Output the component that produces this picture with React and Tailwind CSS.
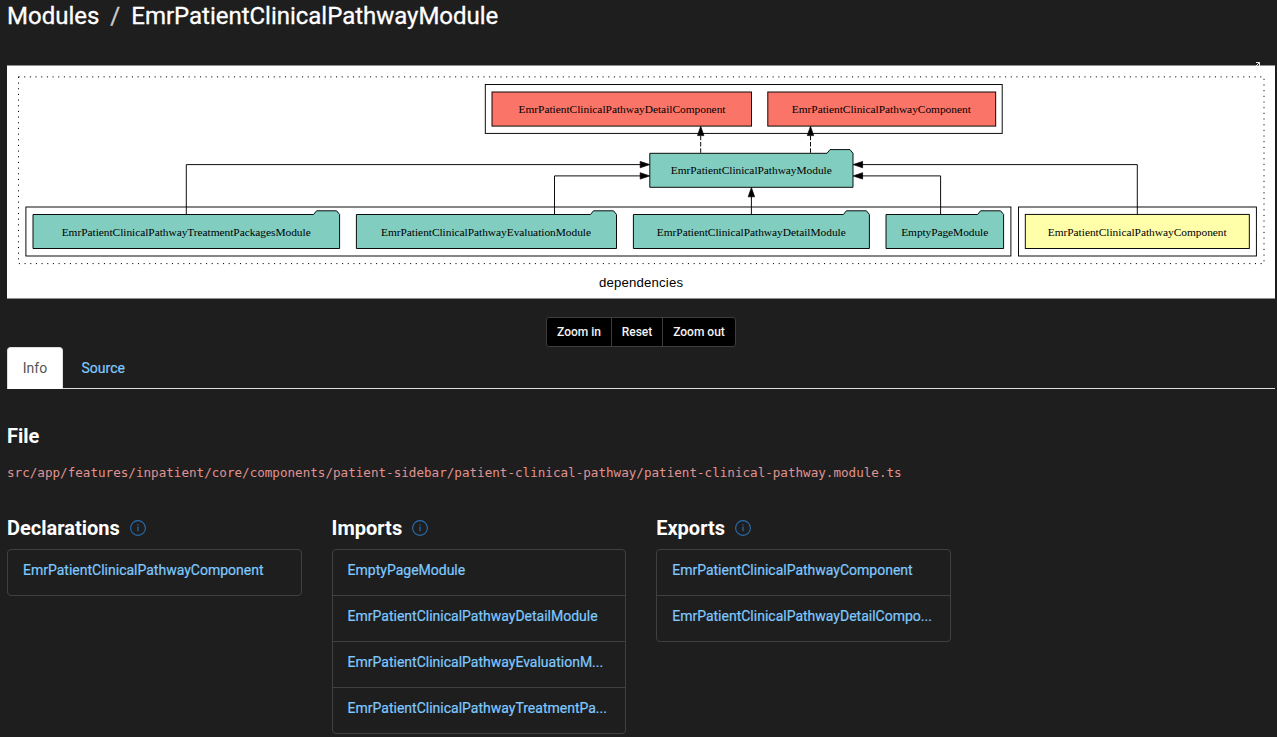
const TEAL = "#81cdc0";
const RED = "#fb7468";
const YELLOW = "#ffffaa";

function NodeLabel({ x, y, width, children }) {
  return (
    <text x={x} y={y} textAnchor="middle" textLength={width} lengthAdjust="spacing" className="fill-black font-['Liberation_Serif',serif] text-[11.4px]">
      {children}
    </text>
  );
}

function ModuleNode({ x1, y1, x2, y2, label, labelX, labelWidth }) {
  const points = `${x2},${y1} ${x2 - 3},${y1 - 3.7} ${x2 - 23},${y1 - 3.7} ${x2 - 26},${y1} ${x1},${y1} ${x1},${y2} ${x2},${y2}`;
  return (
    <g>
      <polygon points={points} fill={TEAL} stroke="black" strokeWidth="0.95" />
      <NodeLabel x={labelX} y={y1 + 21.1} width={labelWidth}>{label}</NodeLabel>
    </g>
  );
}

function ComponentNode({ x, y, width, fill, label, labelX, labelWidth }) {
  return (
    <g>
      <rect x={x} y={y} width={width} height="34.1" fill={fill} stroke="black" strokeWidth="0.95" />
      <NodeLabel x={labelX} y={y + 21.2} width={labelWidth}>{label}</NodeLabel>
    </g>
  );
}

function DependencyGraph() {
  return (
    <svg viewBox="7 66 1268 232" className="block h-full w-full overflow-visible" fill="none">
      <rect x="7" y="65.5" width="1268" height="233" fill="white" />
      <rect x="18.5" y="76.9" width="1245.5" height="186.7" stroke="black" strokeWidth="1" strokeDasharray="1.1 4.57" />
      <g stroke="black" strokeWidth="0.95">
        <rect x="485.3" y="84.5" width="516.9" height="48.9" />
        <rect x="25.9" y="207" width="985" height="49" />
        <rect x="1018.5" y="207" width="237.9" height="49" />
      </g>
      <ComponentNode x={492} y={92} width={259.5} fill={RED} label="EmrPatientClinicalPathwayDetailComponent" labelX={622} labelWidth={207} />
      <ComponentNode x={767.8} y={92} width={227.9} fill={RED} label="EmrPatientClinicalPathwayComponent" labelX={881.3} labelWidth={179} />
      <ModuleNode x1={649.8} y1={153.3} x2={853} y2={187.3} label="EmrPatientClinicalPathwayModule" labelX={751.3} labelWidth={161} />
      <ModuleNode x1={33} y1={214.5} x2={339.6} y2={248.5} label="EmrPatientClinicalPathwayTreatmentPackagesModule" labelX={186.2} labelWidth={249} />
      <ModuleNode x1={356.4} y1={214.5} x2={616.5} y2={248.5} label="EmrPatientClinicalPathwayEvaluationModule" labelX={486} labelWidth={210} />
      <ModuleNode x1={633.4} y1={214.5} x2={869.4} y2={248.5} label="EmrPatientClinicalPathwayDetailModule" labelX={751.3} labelWidth={189} />
      <ModuleNode x1={886} y1={214.5} x2={1003.6} y2={248.5} label="EmptyPageModule" labelX={944.7} labelWidth={87} />
      <ComponentNode x={1025.3} y={214.4} width={224} fill={YELLOW} label="EmrPatientClinicalPathwayComponent" labelX={1137.2} labelWidth={179} />
      <g stroke="black" strokeWidth="0.95">
        <path d="M186.3 214.4V164.6H641" />
        <path d="M554.5 214.4V175.9H641" />
        <path d="M751.4 214.4V196" />
        <path d="M940.6 214.4V175.9H862" />
        <path d="M1137.3 214.4V164.6H862" />
        <path d="M700.7 152.8V135M810.5 152.8V135" strokeDasharray="4.5 1.8" />
      </g>
      <g fill="black" stroke="black" strokeWidth="0.7">
        <polygon points="640.2,161.4 649.7,164.6 640.2,167.8" />
        <polygon points="640.2,172.7 649.7,175.9 640.2,179.1" />
        <polygon points="862.6,161.4 853.2,164.6 862.6,167.8" />
        <polygon points="862.6,172.7 853.2,175.9 862.6,179.1" />
        <polygon points="748.2,196.8 751.4,187.5 754.6,196.8" />
        <polygon points="697.5,135.6 700.7,126.3 703.9,135.6" />
        <polygon points="807.3,135.6 810.5,126.3 813.7,135.6" />
      </g>
      <text x="641" y="287" textAnchor="middle" textLength="84" className="fill-black font-['Liberation_Sans',sans-serif] text-[13.2px]">dependencies</text>
    </svg>
  );
}

function InfoIcon() {
  return (
    <svg viewBox="0 0 16 16" className="h-4 w-4" fill="none" stroke="#2a6cad" strokeWidth="1.1">
      <circle cx="8" cy="8" r="7.4" />
      <path d="M8 6.6v4.6" strokeWidth="1.2" />
      <path d="M8 4.3v1.3" strokeWidth="1.2" />
    </svg>
  );
}

function ListColumn({ title, items }) {
  return (
    <section className="w-[294.6px]">
      <h3 className="flex h-6 items-center gap-[10px] text-[20px] font-bold leading-6 text-white">
        {title}
        <InfoIcon />
      </h3>
      <ul className="mt-[9px] divide-y divide-[#404040] rounded-[4px] border border-[#404040]">
        {items.map((item) => (
          <li key={item} className="h-[46px] px-[15px] pt-[10px] last:h-[45px]">
            <a className="block whitespace-nowrap text-[14px] leading-5 text-[#7fc9ff] [-webkit-text-stroke:0.2px]">{item}</a>
          </li>
        ))}
      </ul>
    </section>
  );
}

export default function App() {
  return (
    <main className="h-[737px] w-[1277px] overflow-hidden bg-[#1e1e1e] pl-[7px] pr-[2px] font-[Roboto,sans-serif]">
      <header className="flex h-[66px] text-[24px] leading-[32px] text-white [-webkit-text-stroke:0.3px]">
        <span>Modules</span>
        <span className="px-[11px] text-[#cccccc]">/</span>
        <span className="tracking-[-0.02px]">EmrPatientClinicalPathwayModule</span>
      </header>

      <div className="relative h-[232px]">
        <DependencyGraph />
        <svg viewBox="0 0 5 5" className="absolute -top-[4px] right-[15px] h-[5px] w-[5px]" fill="none" stroke="#e8e8e8" strokeWidth="1">
          <path d="M1 .5h3.5V4M4.5 .5L.5 4.5" />
        </svg>
      </div>

      <div className="mt-[19px] flex h-[30px] justify-center pr-[1px]">
        <div className="flex divide-x divide-[#3d3d3d] rounded-[3px] border border-[#3d3d3d] bg-black text-[12px] font-medium leading-[28px] text-[#f4f4f4]">
          <button className="w-[65px] pl-px">Zoom in</button>
          <button className="w-[51px] pl-px">Reset</button>
          <button className="w-[72px] pl-px">Zoom out</button>
        </div>
      </div>

      <nav className="flex h-[42px] border-b border-[#dddddd] text-[14px] leading-[20px]">
        <a className="h-[42px] w-[56px] rounded-t-[4px] border border-b-0 border-[#dddddd] bg-white pt-[10px] text-center text-[#555555]">Info</a>
        <a className="pl-[18.5px] pt-[11px] text-[#7fc9ff] [-webkit-text-stroke:0.2px]">Source</a>
      </nav>

      <section className="pt-[35px]">
        <h3 className="text-[20px] font-bold leading-6 text-white">File</h3>
        <p className="mt-[16px] whitespace-nowrap font-['DejaVu_Sans_Mono',monospace] text-[12.6px] leading-[18px] text-[#e09393]">
          src/app/features/inpatient/core/components/patient-sidebar/patient-clinical-pathway/patient-clinical-pathway.module.ts
        </p>
      </section>

      <div className="mt-[34px] flex gap-[30px]">
        <ListColumn title="Declarations" items={["EmrPatientClinicalPathwayComponent"]} />
        <ListColumn
          title="Imports"
          items={[
            "EmptyPageModule",
            "EmrPatientClinicalPathwayDetailModule",
            "EmrPatientClinicalPathwayEvaluationM...",
            "EmrPatientClinicalPathwayTreatmentPa...",
          ]}
        />
        <ListColumn title="Exports" items={["EmrPatientClinicalPathwayComponent", "EmrPatientClinicalPathwayDetailCompo..."]} />
      </div>
    </main>
  );
}
